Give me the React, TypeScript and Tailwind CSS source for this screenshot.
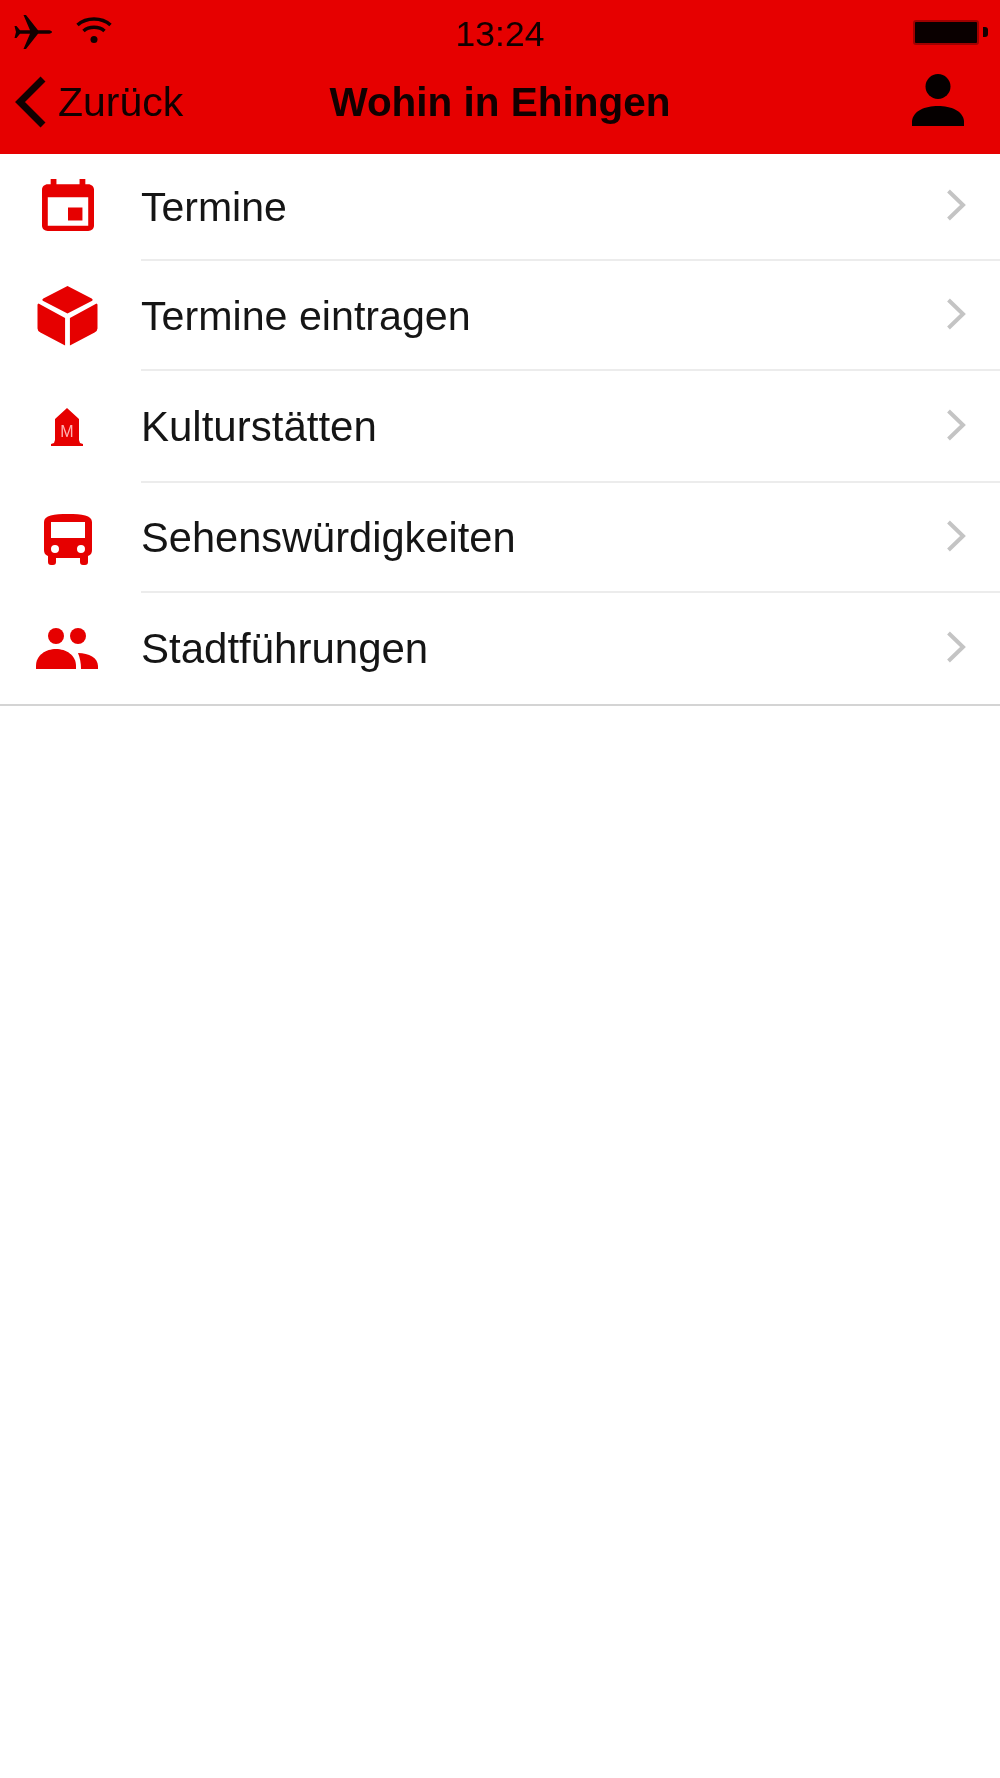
import React from "react";

const Calendar = () => (
  <svg viewBox="3 1 18 20" preserveAspectRatio="none" className="w-[52px] h-[52px] mb-[6px] ml-[1px]" fill="#e60000">
    <path d="M17 12h-5v5h5v-5zM16 1v2H8V1H6v2H5c-1.11 0-1.99.9-1.99 2L3 19c0 1.1.89 2 2 2h14c1.1 0 2-.9 2-2V5c0-1.1-.9-2-2-2h-1V1h-2zm3 18H5V8h14v11z" />
  </svg>
);

const Cube = () => (
  <svg viewBox="0 0 62 62" className="w-[61px] h-[60px]" fill="#e60000">
    <path d="M31 0 L56 13 Q58 14.5 56 15.5 L31 28.5 L6 15.5 Q4 14.5 6 13 Z" />
    <path d="M1 18 L28.5 33 L28.5 61.5 L3 48 Q0 46.5 0 44 L0 19 Z" />
    <path d="M61 18 L33.5 33 L33.5 61.5 L59 48 Q62 46.5 62 44 L62 19 Z" />
  </svg>
);

const Monument = () => (
  <div className="relative w-[32px] h-[38px]">
    <svg viewBox="0 0 32 38" className="w-[32px] h-[38px]" fill="#e60000">
      <path d="M16 0 L28 11 L28 32 L29 35 L32 36 L32 38 L0 38 L0 36 L3 35 L4 32 L4 11 Z" />
    </svg>
    <span className="absolute left-0 right-0 top-[15px] text-center text-[16px] leading-[18px] text-[#ffb3b3] font-['Liberation_Sans',sans-serif]">M</span>
  </div>
);

const Bus = () => (
  <svg viewBox="0 0 48 51" className="w-[48px] h-[51px] mt-[2px] ml-[2px]" fill="#e60000" fillRule="evenodd">
    <path d="M0 8 C0 1.5 10 0 24 0 C38 0 48 1.5 48 8 L48 36 C48 39 47 41 44 42 L44 48 C44 50 43 51 41 51 L39 51 C37 51 36 50 36 48 L36 44 L12 44 L12 48 C12 50 11 51 9 51 L7 51 C5 51 4 50 4 48 L4 42 C1 41 0 39 0 36 Z M7 8 L7 24 L41 24 L41 8 Z M11 31 A4 4 0 1 0 11 39 A4 4 0 1 0 11 31 Z M37 31 A4 4 0 1 0 37 39 A4 4 0 1 0 37 31 Z" />
  </svg>
);

const People = () => (
  <svg viewBox="0 0 62 41" className="w-[62px] h-[41px]" fill="#e60000">
    <circle cx="20" cy="8" r="8" />
    <circle cx="42" cy="8" r="8" />
    <path d="M0 38 C0 27 10 21 20 21 C30 21 40 27 40 38 L40 41 L0 41 Z" />
    <path d="M42 25 C53 25 62 30 62 38 L62 41 L45 41 C45 35 44 30 42 25 Z" />
  </svg>
);

const Chevron = () => (
  <svg viewBox="0 0 20 32" className="w-[20px] h-[32px] mb-[3px]" fill="none" stroke="#c4c4c4" strokeWidth="4">
    <path d="M2.5 2 L17 16 L2.5 30" />
  </svg>
);

const rows = [
  { label: "Termine", icon: <Calendar />, cls: "h-[107px]", text: "text-[41px]" },
  { label: "Termine eintragen", icon: <Cube />, cls: "h-[110px]", text: "text-[41.2px]" },
  { label: "Kulturstätten", icon: <Monument />, cls: "h-[112px]", text: "text-[42px]" },
  { label: "Sehenswürdigkeiten", icon: <Bus />, cls: "h-[110px]", text: "text-[41.6px]" },
  { label: "Stadtführungen", icon: <People />, cls: "h-[111px]", text: "text-[42px]" },
];

export default function App() {
  return (
    <div className="w-[1000px] h-[1778px] bg-white font-['Liberation_Sans',sans-serif] overflow-hidden">
      <header className="bg-[#e60000] h-[154px] flex flex-col text-[#110000]">
        <div className="h-[64px] flex items-center pl-[14px] pr-[12px] blur-[0.6px]">
          <div className="flex-1 flex items-center gap-[24px]">
            <svg viewBox="0 0 38 34" className="w-[38px] h-[34px]" fill="#110000">
              <path d="M38 17 C38 15.8 36 15.2 34 15.2 L24 15.2 L12 0 L9.5 0 L16 15.2 L6 15.2 L2.5 11 L0.5 11 L2 17 L0.5 23 L2.5 23 L6 18.8 L16 18.8 L9.5 34 L12 34 L24 18.8 L34 18.8 C36 18.8 38 18.2 38 17 Z" />
            </svg>
            <svg viewBox="0 0 36 28" className="w-[36px] h-[28px] mb-[4px]" fill="none" stroke="#110000" strokeWidth="3.5">
              <path d="M1.5 9 C10.5 1 25.5 1 34.5 9" />
              <path d="M7.5 15 C13 10 23 10 28.5 15" />
              <circle cx="18" cy="23.5" r="3.5" fill="#110000" stroke="none" />
            </svg>
          </div>
          <span className="text-[35.5px] leading-[40px] mr-[2px] pt-[3px]">13:24</span>
          <div className="flex-1 flex items-center justify-end">
            <div className="w-[66px] h-[25px] bg-[#0a0000] border-[2px] border-[#a00000] rounded-[3px]" />
            <div className="w-[5px] h-[10px] bg-[#110000] rounded-r-[3px] ml-[4px]" />
          </div>
        </div>
        <div className="h-[76px] flex items-center px-[15px] blur-[0.6px]">
          <div className="flex-1 flex items-center gap-[11px]">
            <svg viewBox="0 0 32 52" className="w-[32px] h-[52px]" fill="none" stroke="#110000" strokeWidth="7">
              <path d="M28 3 L5 26 L28 49" />
            </svg>
            <span className="text-[41px] leading-[48px]">Zurück</span>
          </div>
          <span className="text-[40.5px] leading-[48px] font-bold">Wohin in Ehingen</span>
          <div className="flex-1 flex justify-end">
            <svg viewBox="0 0 52 52" className="w-[52px] h-[52px] mb-[5px] mr-[21px]" fill="#050000">
              <circle cx="26" cy="12.5" r="12.5" />
              <path d="M0 52 L0 47 C1 37 13 32 26 32 C39 32 51 37 52 47 L52 52 Z" />
            </svg>
          </div>
        </div>
      </header>
      <ul className="border-b-[2px] border-[#d4d4d4] blur-[0.6px]">
        {rows.map((r, i) => (
          <li key={r.label} className={`flex ${r.cls}`}>
            <div className="w-[141px] shrink-0 pr-[7px] flex items-center justify-center">{r.icon}</div>
            <div className={`flex-1 flex items-center justify-between pr-[34px] ${i < rows.length - 1 ? "border-b-[2px] border-[#ececec]" : ""}`}>
              <span className={`${r.text} leading-[48px] text-[#151515] pt-[1px]`}>{r.label}</span>
              <Chevron />
            </div>
          </li>
        ))}
      </ul>
    </div>
  );
}
